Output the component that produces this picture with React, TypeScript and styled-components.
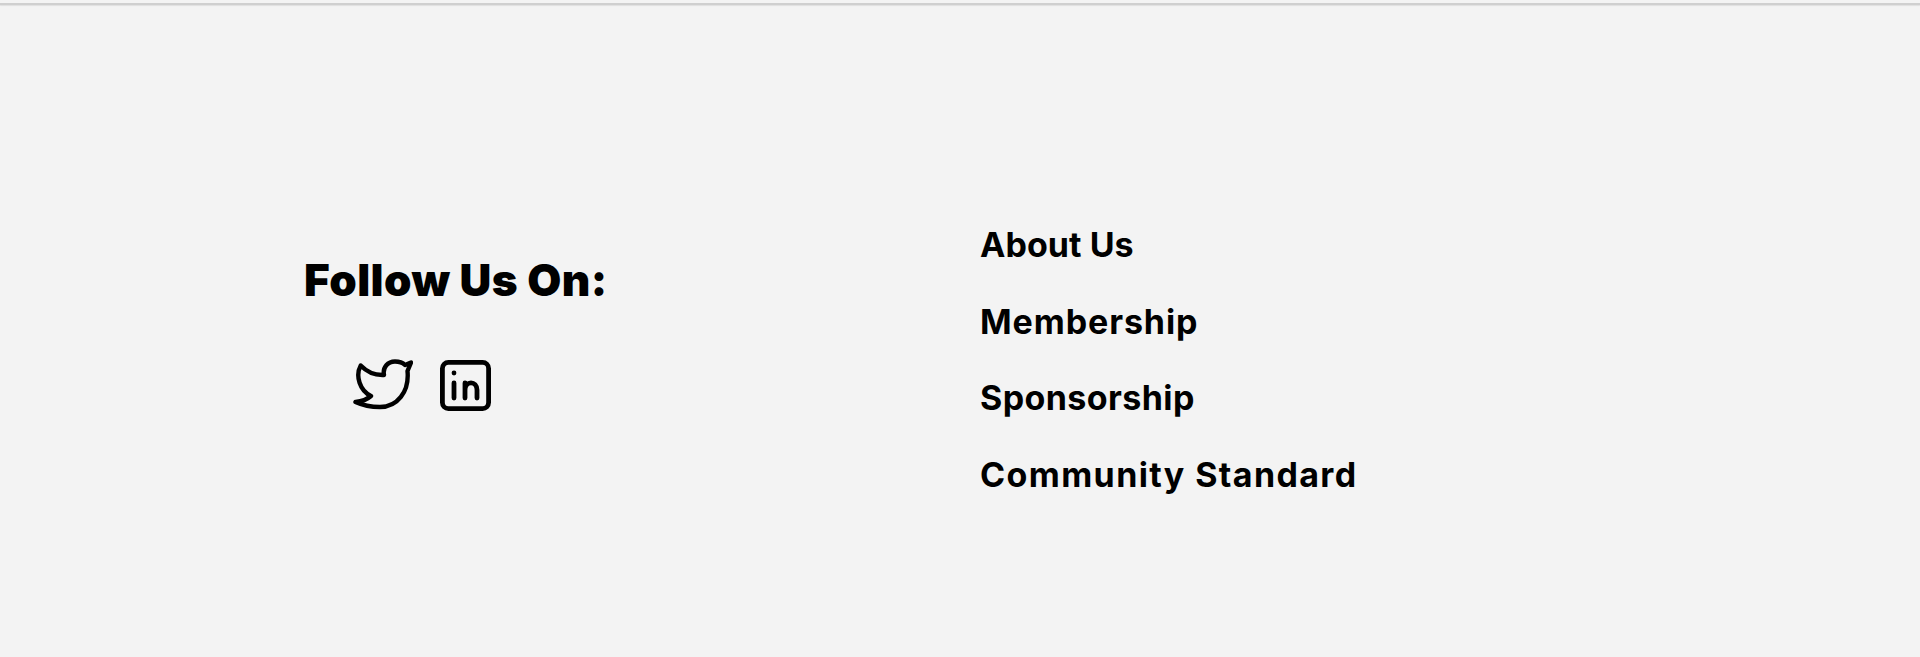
import React from "react";
import styled, { createGlobalStyle } from "styled-components";

const Global = createGlobalStyle`
  html, body { margin: 0; padding: 0; background: #f3f3f3; }
  #root { height: 657px; overflow: hidden; }
`;

const Footer = styled.footer`
  height: 657px;
  box-sizing: border-box;
  background: #f3f3f3;
  display: flex;
  flex-direction: column;
  font-family: "Inter", "Liberation Sans", sans-serif;
  color: #000;
`;

const Rule = styled.hr`
  margin: 3px 0 0;
  height: 2px;
  border: 0;
  flex: none;
  background: #cfcfcf;
  box-shadow: 0 1px 1px rgba(0, 0, 0, 0.08);
`;

const Columns = styled.div`
  display: flex;
  padding: 220px 0 0 304px;
`;

const Social = styled.section`
  width: 676px;
  padding-top: 30px;
`;

const Heading = styled.h2`
  margin: 0;
  font-size: 44px;
  line-height: 50px;
  font-weight: 900;
  letter-spacing: 0.4px;
  white-space: nowrap;
`;

const Icons = styled.div`
  display: flex;
  gap: 22px;
  margin: 53px 0 0 49px;
`;

const IconLink = styled.a`
  display: flex;
  color: #000;
  svg { display: block; }
`;

const Links = styled.nav`
  display: flex;
  flex-direction: column;
  gap: 36.5px;
`;

const LinkItem = styled.a<{ $spacing: number }>`
  font-size: 34px;
  line-height: 40px;
  font-weight: 700;
  letter-spacing: ${(p) => p.$spacing}px;
  color: #000;
  white-space: nowrap;
`;

const items: [string, number][] = [
  ["About Us", 0.05],
  ["Membership", 0.9],
  ["Sponsorship", 0.4],
  ["Community Standard", 1.38],
];

const TwitterIcon = () => (
  <svg width="60" height="60" viewBox="0 0 60 60" fill="none" stroke="currentColor" strokeWidth="4.4" strokeLinejoin="round" strokeLinecap="round">
    <path d="M7.7 7.5C13 13 21 17.5 31 17C29.5 9 35 3.5 42 3.5C46 3.5 50 5 52 7L58 4.5L54.5 13C56.5 34 44 49 27 49C17 49 9 47 2.5 44C8 43.5 14 41.5 18 38C7 33 2 18 7.7 7.5Z" />
  </svg>
);

const LinkedinIcon = () => (
  <svg width="60" height="60" viewBox="0 0 60 60" fill="none" stroke="currentColor" strokeWidth="4.8" strokeLinecap="round" strokeLinejoin="round">
    <rect x="7.4" y="4.4" width="46.2" height="46.2" rx="6" />
    <path d="M19 25V40" />
    <path d="M19 15V15.1" />
    <path d="M30 40V25M30 32C30 22.5 42 22.5 42 32V40" />
  </svg>
);

export default function App() {
  return (
    <Footer>
      <Global />
      <Rule />
      <Columns>
        <Social>
          <Heading>Follow Us On:</Heading>
          <Icons>
            <IconLink><TwitterIcon /></IconLink>
            <IconLink><LinkedinIcon /></IconLink>
          </Icons>
        </Social>
        <Links>
          {items.map(([t, s]) => (
            <LinkItem key={t} $spacing={s}>{t}</LinkItem>
          ))}
        </Links>
      </Columns>
    </Footer>
  );
}
